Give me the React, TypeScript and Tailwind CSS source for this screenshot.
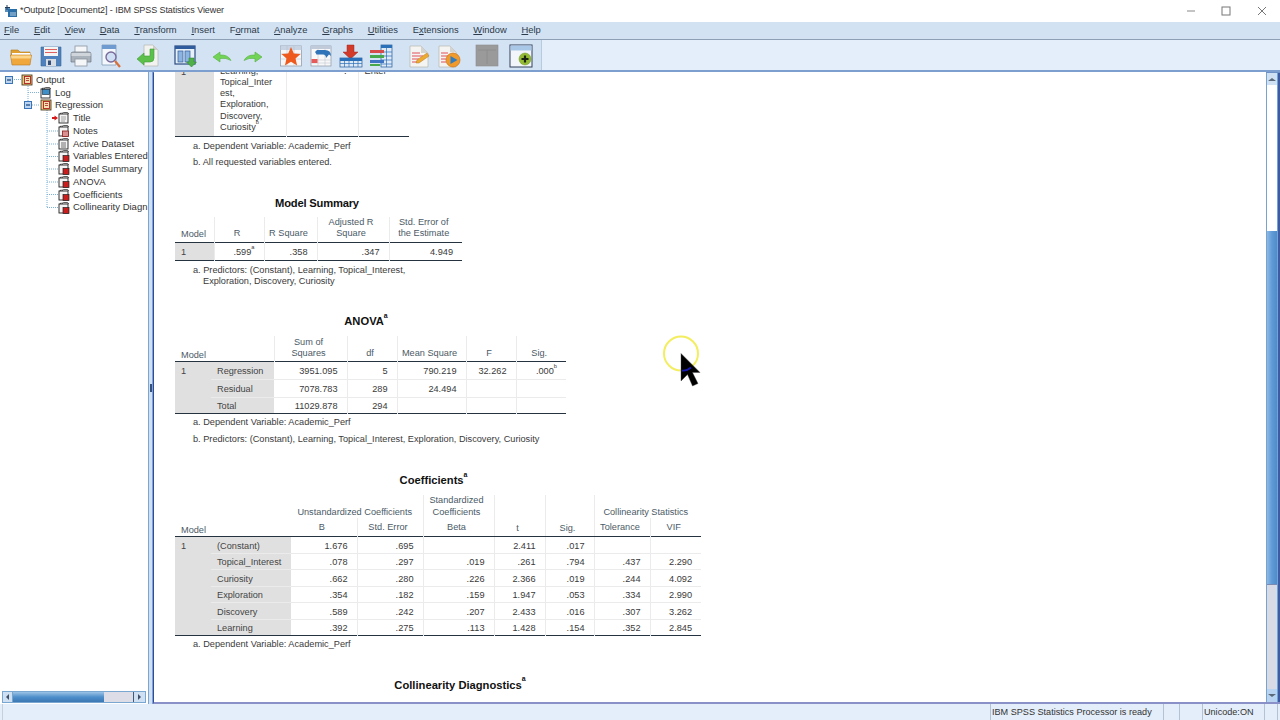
import React from "react";

const Sup = ({ c }: { c: string }) => <sup className="text-[0.62em] leading-[0] align-[0.55em]">{c}</sup>;

/* ---------- toolbar icons ---------- */
const Tool = ({ className, children }: { className?: string; children: React.ReactNode }) => (
  <svg viewBox="0 0 24 24" className={`w-[24px] h-[24px] shrink-0 ${className ?? ""}`}>{children}</svg>
);

const IconFolder = () => (
  <Tool>
    <path d="M2 6h7l2 2h10v4H2z" fill="#e0a030" stroke="#b07a20" strokeWidth=".6" />
    <rect x="3" y="9" width="18" height="3" fill="#fff" />
    <path d="M1.5 11h21l-1.5 10H3z" fill="#f0a83c" stroke="#b87a20" strokeWidth=".6" />
    <path d="M2 11.5h20l-.4 3H2.4z" fill="#fbd68a" />
  </Tool>
);
const IconSave = () => (
  <Tool>
    <path d="M2 3h20v19H2z" fill="#4f82bd" stroke="#3a6496" strokeWidth=".6" />
    <rect x="5" y="3" width="14" height="9" fill="#f4f4f4" />
    <path d="M6 5.5h12M6 8.5h12" stroke="#e06060" strokeWidth="1" />
    <rect x="7" y="15" width="10" height="7" fill="#d8dde4" />
    <rect x="9" y="16.5" width="3" height="4.5" fill="#33507a" />
  </Tool>
);
const IconPrint = () => (
  <Tool>
    <rect x="6" y="2" width="12" height="8" fill="#f4f6f8" stroke="#8a949e" strokeWidth=".8" />
    <path d="M2 10q0-2 2-2h16q2 0 2 2v8H2z" fill="#a9b1ba" stroke="#6e7780" strokeWidth=".7" />
    <rect x="2.5" y="9" width="19" height="3" fill="#cfd5db" />
    <rect x="6" y="15" width="12" height="7" fill="#f4f6f8" stroke="#8a949e" strokeWidth=".8" />
  </Tool>
);
const IconPreview = () => (
  <Tool>
    <path d="M3 1h14v20H3z" fill="#f4f7fb" stroke="#7f9ab8" strokeWidth=".8" />
    <rect x="3" y="1" width="14" height="4" fill="#6f9bd0" />
    <circle cx="12" cy="13" r="5" fill="#cfe0f4" stroke="#7a6a9a" strokeWidth="1.4" />
    <path d="M16 17l5 6" stroke="#d8703c" strokeWidth="2.2" />
  </Tool>
);
const IconExport = () => (
  <Tool>
    <path d="M8 1h9l5 5v16H8z" fill="#f2f2f0" stroke="#b5b5b0" strokeWidth=".7" />
    <path d="M17 1v5h5z" fill="#cfcfca" />
    <path d="M14 5h4v9q0 4-4 4H8v3l-7-6 7-6v3h6z" fill="#5cc04a" stroke="#3f9a35" strokeWidth=".6" />
  </Tool>
);
const IconGoto = () => (
  <Tool>
    <rect x="2" y="2" width="20" height="18" fill="#e8f0f8" stroke="#2a4a80" strokeWidth="1.2" />
    <rect x="2" y="2" width="20" height="3" fill="#2f5c9c" />
    <rect x="5" y="7" width="5" height="11" fill="#8cb4e0" stroke="#2f5c9c" strokeWidth=".7" />
    <rect x="12" y="7" width="5" height="11" fill="#8cb4e0" stroke="#2f5c9c" strokeWidth=".7" />
    <path d="M16 14h5v4h2.5l-5 5-5-5H16z" fill="#4fb04a" stroke="#2f8030" strokeWidth=".5" />
  </Tool>
);
const IconUndo = ({ flip }: { flip?: boolean }) => (
  <Tool>
    <g transform={flip ? "matrix(-1 0 0 1 24 0)" : undefined}>
      <path d="M3 13l7-5v3q8-.5 11 5.5-5-3-11-2V18z" fill="#72d456" stroke="#52ae3e" strokeWidth=".6" />
    </g>
  </Tool>
);
const IconStar = () => (
  <Tool>
    <rect x="1.5" y="2" width="21" height="20" fill="#f6f6f6" stroke="#8a94a4" strokeWidth=".7" />
    <rect x="1.5" y="2" width="21" height="4" fill="#c8d4e4" />
    <path d="M1.5 10h21M1.5 15h21M8 2v20M15 2v20" stroke="#b5bcc8" strokeWidth=".5" />
    <path d="M12 3l2.8 6.5 6.7.6-5 4.5 1.6 6.9-6.100-3.700-6.100 3.700 1.600-6.900-5-4.500 6.700-.6z" fill="#ee5a1e" />
  </Tool>
);
const IconSplit = () => (
  <Tool>
    <rect x="2" y="2" width="20" height="20" fill="#f8f8f8" stroke="#8a94a4" strokeWidth=".7" />
    <rect x="2" y="2" width="20" height="3" fill="#c0cad8" />
    <path d="M2 16h20M2 19h20M9 5v17M16 5v17" stroke="#b5bcc8" strokeWidth=".5" />
    <rect x="2.5" y="15" width="6" height="4" fill="#e65a5a" />
    <path d="M8 6h8q6 0 6 6l-2-1.500L17 14q0-3.500-3-3.500H8z" fill="#2f74b8" />
    <path d="M8 6l-2 2 2 3z" fill="#2f74b8" />
  </Tool>
);
const IconDownTable = () => (
  <Tool>
    <path d="M8 1h7v7h4l-7.500 7L4 8h4z" fill="#d23a2a" stroke="#a02a20" strokeWidth=".5" />
    <rect x="1" y="14" width="22" height="9" fill="#dfe9f4" stroke="#1f5a9a" strokeWidth=".7" />
    <rect x="1" y="14" width="22" height="3" fill="#2a70b8" />
    <path d="M1 19.500h22M5.500 17v6M10 17v6M14.500 17v6M19 17v6" stroke="#2a70b8" strokeWidth=".7" />
  </Tool>
);
const IconBars = () => (
  <Tool>
    <rect x="12" y="1" width="11" height="22" fill="#dfe9f4" stroke="#1f5a9a" strokeWidth=".7" />
    <rect x="12" y="1" width="11" height="3" fill="#2a70b8" />
    <path d="M12 8h11M12 12h11M12 16h11M12 20h11M17.500 4v19" stroke="#2a70b8" strokeWidth=".7" />
    <rect x="1" y="6" width="14" height="3" fill="#d64a4a" />
    <rect x="1" y="11" width="14" height="3" fill="#46a84a" />
    <rect x="1" y="16" width="14" height="3" fill="#3d74c4" />
    <rect x="1" y="20" width="10" height="2" fill="#46a84a" />
  </Tool>
);
const IconDocPen = () => (
  <Tool>
    <path d="M3 2h11l7 7v14H3z" fill="#f4f4f2" stroke="#b5b5b0" strokeWidth=".7" />
    <path d="M14 2v7h7z" fill="#d4d4d0" />
    <path d="M5 9h8M5 12h11M5 15h7M5 18h6" stroke="#e0505a" strokeWidth="1.2" />
    <path d="M9 19l1-3 10-7 2 3-10 7z" fill="#eeaa30" stroke="#b47a20" strokeWidth=".5" />
  </Tool>
);
const IconDocPlay = () => (
  <Tool>
    <path d="M2 2h11l6 6v15H2z" fill="#f4f4f2" stroke="#b5b5b0" strokeWidth=".7" />
    <path d="M13 2v6h6z" fill="#d4d4d0" />
    <path d="M4 9h7M4 12h7M4 15h5M4 18h5" stroke="#e0505a" strokeWidth="1.2" />
    <circle cx="16" cy="16" r="7" fill="#f09a2c" stroke="#c87418" strokeWidth=".7" />
    <path d="M13.500 12l7 4-7 4z" fill="#2f7cc0" />
  </Tool>
);
const IconGray = () => (
  <Tool>
    <rect x="1" y="1" width="22" height="21" fill="#9a9a9a" stroke="#8c8c8c" strokeWidth=".6" />
    <path d="M3 6h18M12 6v14" stroke="#8a8a8a" strokeWidth=".8" />
  </Tool>
);
const IconPlus = () => (
  <Tool>
    <rect x="1" y="1" width="22" height="22" fill="#f2f6fa" stroke="#33415a" strokeWidth="1" />
    <rect x="1.5" y="1.5" width="21" height="5" fill="#a9c8e8" />
    <circle cx="16" cy="15" r="6" fill="#93bc34" stroke="#6e9424" strokeWidth=".5" />
    <path d="M16 11.500v7M12.500 15h7" stroke="#1c2414" strokeWidth="2.2" />
  </Tool>
);

/* ---------- tree icons ---------- */
type Kind = "root" | "log" | "title" | "notes" | "doc" | "pivot";
const Book = ({ kind }: { kind: Kind }) => {
  const c = kind === "log" ? "#fff" : "#f4f4f4";
  return (
    <svg viewBox="0 0 12 12" className="w-[12px] h-[12px] shrink-0">
      {kind === "root" ? (
        <g>
          <rect x="1" y="1" width="10" height="10" fill="#e9c877" stroke="#3a2a10" strokeWidth=".8" />
          <rect x="3.500" y="2.500" width="6" height="7" fill="#f4e0b0" stroke="#b02020" strokeWidth=".9" />
          <path d="M5 4.500h3M5 6.500h3" stroke="#b02020" strokeWidth=".8" />
        </g>
      ) : (
        <g>
          <path d="M1.500 3q0-2 2-2" fill="none" stroke="#222" strokeWidth=".8" />
          <rect x="1" y="2" width="9" height="9" fill={c} stroke="#222" strokeWidth=".9" />
          <path d="M4 2q0-1.400 1.500-1.400H9q1.500 0 1.500 1.400" fill="none" stroke="#222" strokeWidth=".8" />
          {kind === "log" && <rect x="2.500" y="2.500" width="7" height="5" fill="#3f8fc8" stroke="#123" strokeWidth=".6" />}
          {kind === "title" && <path d="M3 5h5M3 7h5M3 9h4" stroke="#8a8a8a" strokeWidth=".8" />}
          {kind === "doc" && <path d="M3 5h5M3 7h5M3 9h5" stroke="#333" strokeWidth=".7" />}
          {kind === "notes" && <rect x="4.500" y="6" width="6" height="5.500" fill="#d89090" stroke="#8a1a1a" strokeWidth=".8" />}
          {kind === "pivot" && <rect x="5" y="5.500" width="6" height="6" fill="#c81e1e" stroke="#222" strokeWidth=".7" />}
        </g>
      )}
    </svg>
  );
};

const Expander = () => (
  <svg viewBox="0 0 8 8" className="w-[8px] h-[8px] shrink-0">
    <rect x=".5" y=".5" width="7" height="7" fill="#bcd4ee" stroke="#3a74b8" strokeWidth="1" />
    <path d="M2 4h4" stroke="#14407a" strokeWidth="1.200" />
  </svg>
);

const TreeRow = ({ label, kind, pl, exp, mark }: { label: string; kind: Kind; pl: string; exp?: boolean; mark?: boolean }) => (
  <div className={`relative h-[12.77px] flex items-center gap-[3px] whitespace-nowrap ${pl}`}>
    {exp && <span className="mr-[5px] flex"><Expander /></span>}
    {mark && (
      <svg viewBox="0 0 6 6" className="absolute left-[52px] top-[3px] w-[6px] h-[6px]">
        <path d="M0 2h2.500V.5L6 3 2.500 5.500V4H0z" fill="#d81818" />
      </svg>
    )}
    <Book kind={kind} />
    <span>{label}</span>
  </div>
);

/* ---------- table cells ---------- */
type CP = { className?: string; children?: React.ReactNode; colSpan?: number; rowSpan?: number };
const LINE = "border-[#ebebeb]";
const H = ({ className, children, colSpan, rowSpan }: CP) => (
  <td colSpan={colSpan} rowSpan={rowSpan} className={`p-0 pr-[4px] text-center align-bottom text-[#4b5a66] font-normal ${className ?? ""}`}>{children}</td>
);
const N = ({ className, children }: CP) => (
  <td className={`p-0 pt-[2.5px] pr-[9px] leading-[11.3px] text-right text-[#3a3a3a] border-l border-b ${LINE} ${className ?? ""}`}>{children}</td>
);
const L = ({ className, children }: CP) => (
  <td className={`p-0 pt-[2.5px] pl-[6px] leading-[11.3px] text-left text-[#444] bg-[#e0e0e0] ${className ?? ""}`}>{children}</td>
);
const ModelNo = ({ rowSpan }: { rowSpan: number }) => (
  <td rowSpan={rowSpan} className="p-0 pt-[4px] pl-[6px] leading-[11.3px] align-top text-left text-[#444] bg-[#e0e0e0]">1</td>
);
const Note = ({ className, children }: CP) => (
  <div className={`ml-[18px] leading-[11.3px] text-[#3a3a3a] ${className ?? ""}`}>{children}</div>
);
const Title = ({ className, children }: CP) => (
  <div className={`text-center text-[11.2px] leading-[16px] font-bold text-[#111] ${className ?? ""}`}>{children}</div>
);

const regRows = [
  ["Topical_Interest", ".078", ".297", ".019", ".261", ".794", ".437", "2.290"],
  ["Curiosity", ".662", ".280", ".226", "2.366", ".019", ".244", "4.092"],
  ["Exploration", ".354", ".182", ".159", "1.947", ".053", ".334", "2.990"],
  ["Discovery", ".589", ".242", ".207", "2.433", ".016", ".307", "3.262"],
  ["Learning", ".392", ".275", ".113", "1.428", ".154", ".352", "2.845"],
];

const treeItems: { label: string; kind: Kind }[] = [
  { label: "Title", kind: "title" },
  { label: "Notes", kind: "notes" },
  { label: "Active Dataset", kind: "doc" },
  { label: "Variables Entered", kind: "pivot" },
  { label: "Model Summary", kind: "pivot" },
  { label: "ANOVA", kind: "pivot" },
  { label: "Coefficients", kind: "pivot" },
  { label: "Collinearity Diagn", kind: "pivot" },
];

const Menu = ({ u, rest, pre }: { u: string; rest: string; pre?: string }) => (
  <span>{pre}<span className="underline">{u}</span>{rest}</span>
);

export default function App() {
  return (
    <div className="relative w-[1280px] h-[720px] flex flex-col overflow-hidden bg-white font-['Liberation_Sans',sans-serif] text-[10px] text-[#222]">
      {/* title bar */}
      <div className="h-[22px] shrink-0 flex items-center pl-[5px] bg-white">
        <svg viewBox="0 0 12 12" className="w-[12px] h-[12px] shrink-0">
          <rect x="0" y="2" width="5" height="5" fill="#5a8fc0" />
          <rect x="3" y="4" width="9" height="8" fill="#2a6ea8" />
          <path d="M5 8h6M5 10h6" stroke="#dfeaf4" strokeWidth=".8" />
          <path d="M2 0v5M0 2.500h5" stroke="#203a5a" strokeWidth="1" />
        </svg>
        <span className="ml-[3px] text-[#333] text-[9px] tracking-[-0.08px]">*Output2 [Document2] - IBM SPSS Statistics Viewer</span>
        <div className="ml-auto flex items-center text-[#777]">
          <svg viewBox="0 0 10 10" className="w-[10px] h-[10px] mr-[25px]"><path d="M1 5h8" stroke="#888" strokeWidth="1" /></svg>
          <svg viewBox="0 0 10 10" className="w-[10px] h-[10px] mr-[26px]"><rect x="1" y="1" width="8" height="8" fill="none" stroke="#777" strokeWidth="1" /></svg>
          <svg viewBox="0 0 10 10" className="w-[10px] h-[10px] mr-[13px]"><path d="M1 1l8 8M9 1l-8 8" stroke="#777" strokeWidth="1" /></svg>
        </div>
      </div>

      {/* menu bar */}
      <div className="h-[17px] shrink-0 flex items-center gap-[14.75px] pl-[4px] bg-[#d2e2f3] text-[#2c3a4a] text-[9.4px]">
        <Menu u="F" rest="ile" />
        <Menu u="E" rest="dit" />
        <Menu u="V" rest="iew" />
        <Menu u="D" rest="ata" />
        <Menu u="T" rest="ransform" />
        <Menu u="I" rest="nsert" />
        <Menu pre="F" u="o" rest="rmat" />
        <Menu u="A" rest="nalyze" />
        <Menu u="G" rest="raphs" />
        <Menu u="U" rest="tilities" />
        <Menu pre="E" u="x" rest="tensions" />
        <Menu u="W" rest="indow" />
        <Menu u="H" rest="elp" />
      </div>

      {/* toolbar */}
      <div className="h-[33px] shrink-0 flex bg-[#e4eefa] border-t border-[#8d9fb4] border-b-2 border-b-[#7c9fd0]">
        <div className="w-[542px] flex items-center pl-[9px] pt-[2px] bg-[#d4e3f4] border-r border-[#b8cadf]">
          <IconFolder />
          <span className="ml-[6px] flex"><IconSave /></span>
          <span className="ml-[6px] flex"><IconPrint /></span>
          <span className="ml-[6px] flex"><IconPreview /></span>
          <span className="ml-[13px] flex"><IconExport /></span>
          <span className="ml-[13px] flex"><IconGoto /></span>
          <span className="ml-[13px] flex"><IconUndo /></span>
          <span className="ml-[7px] flex"><IconUndo flip /></span>
          <span className="ml-[14px] flex"><IconStar /></span>
          <span className="ml-[6px] flex"><IconSplit /></span>
          <span className="ml-[6px] flex"><IconDownTable /></span>
          <span className="ml-[6px] flex"><IconBars /></span>
          <span className="ml-[14px] flex"><IconDocPen /></span>
          <span className="ml-[6px] flex"><IconDocPlay /></span>
          <span className="ml-[14px] flex"><IconGray /></span>
          <span className="ml-[10px] flex"><IconPlus /></span>
        </div>
      </div>

      {/* main */}
      <div className="flex-1 min-h-0 flex">
        {/* tree pane */}
        <div className="w-[148px] shrink-0 flex flex-col bg-white">
          <div className="relative flex-1 min-h-0 overflow-hidden text-[#333] text-[9.5px]">
            <svg className="absolute left-0 top-0 w-[148px] h-[150px] pointer-events-none" viewBox="0 0 148 150">
              <path d="M28 14v15M28 20.500h12M47 38v98M47 59h11M47 72h11M47 84.500h11M47 97h11M47 110h11M47 122.500h11M47 135.500h11M32 33h8M14 7.500h7" stroke="#7fb2d8" strokeWidth="1" strokeDasharray="1 1" fill="none" />
            </svg>
            <div className="relative pt-[1.5px]">
              <TreeRow label="Output" kind="root" pl="pl-[5px]" exp />
              <TreeRow label="Log" kind="log" pl="pl-[40px]" />
              <TreeRow label="Regression" kind="root" pl="pl-[24px]" exp />
              {treeItems.map((t, i) => (
                <TreeRow key={t.label} label={t.label} kind={t.kind} pl="pl-[58px]" mark={i === 0} />
              ))}
            </div>
          </div>
          {/* horizontal scrollbar */}
          <div className="h-[12px] shrink-0 mx-[2px] mb-[1px] flex items-stretch bg-gradient-to-b from-[#9cc3e6] via-[#4f8fcb] to-[#3b78b4] border border-[#79a7d2]">
            <div className="w-[10px] bg-[#cfe0f2] border-r border-[#7aa3cc] flex items-center justify-center">
              <span className="w-0 h-0 border-y-[3px] border-y-transparent border-r-[3px] border-r-[#40506a]" />
            </div>
            <div className="flex-1" />
            <div className="w-[30px] bg-[#dcdde6] border-r border-[#3d5a80]" />
            <div className="w-[11px] bg-[#cfe0f2] flex items-center justify-center">
              <span className="w-0 h-0 border-y-[3px] border-y-transparent border-l-[3px] border-l-[#40506a]" />
            </div>
          </div>
        </div>

        {/* splitter */}
        <div className="w-[5px] shrink-0 bg-[#cfe0f2] border-x border-[#7aa6d6] flex items-center justify-center">
          <span className="w-[2px] h-[8px] bg-[#36507c]" />
        </div>

        {/* output pane */}
        <div className="flex-1 min-w-0 flex border-l border-[#37479a] border-b-2 border-b-[#8a90c8] border-t border-t-[#6f92c6]">
          <div className="flex-1 min-w-0 overflow-hidden bg-white pl-[21px] -mt-px text-[9.2px]">
            {/* Variables entered, scrolled past the top of the pane */}
            <div className="-mt-[8px]">
              <table className="table-fixed border-collapse w-[234px]">
                <colgroup>
                  <col className="w-[39px]" />
                  <col className="w-[72px]" />
                  <col className="w-[72px]" />
                  <col className="w-[51px]" />
                </colgroup>
                <tbody>
                  <tr className="align-top border-b border-[#253240] h-[72px]">
                    <td className="p-0 pt-[1.5px] bg-[#e0e0e0] text-[#444] pl-[6px]">1</td>
                    <td className={`p-0 pt-[1.5px] pl-[6px] leading-[11.3px] text-[#3a3a3a] border-r ${LINE}`}>
                      Learning,<br />Topical_Inter<br />est,<br />Exploration,<br />Discovery,<br />Curiosity<Sup c="b" />
                    </td>
                    <td className={`p-0 pt-[1.5px] pr-[11px] text-right leading-[11.3px] border-r ${LINE}`}>.</td>
                    <td className="p-0 pt-[1.5px] pl-[6px] leading-[11.3px] text-[#3a3a3a]">Enter</td>
                  </tr>
                </tbody>
              </table>
            </div>
            <Note className="mt-[4px]">a. Dependent Variable: Academic_Perf</Note>
            <Note className="mt-[5.5px]">b. All requested variables entered.</Note>

            <Title className="w-[284px] mt-[26px] tracking-[-0.2px]">Model Summary</Title>
            <table className="table-fixed border-collapse w-[287px] mt-[6px]">
              <colgroup>
                <col className="w-[39px]" />
                <col className="w-[50px]" />
                <col className="w-[53px]" />
                <col className="w-[72px]" />
                <col className="w-[73px]" />
              </colgroup>
              <tbody>
                <tr className="h-[26px] border-b border-[#253240] leading-[11.3px]">
                  <H className="text-left pl-[6px] pb-[2px]">Model</H>
                  <H className={`pb-[3px] border-l ${LINE}`}>R</H>
                  <H className={`pb-[3px] border-l ${LINE}`}>R Square</H>
                  <H className={`pb-[3px] border-l ${LINE}`}>Adjusted R<br />Square</H>
                  <H className={`pb-[3px] border-l ${LINE}`}>Std. Error of<br />the Estimate</H>
                </tr>
                <tr className="h-[18px] border-b border-[#253240]">
                  <L>1</L>
                  <N className="border-b-0">.599<Sup c="a" /></N>
                  <N className="border-b-0">.358</N>
                  <N className="border-b-0">.347</N>
                  <N className="border-b-0">4.949</N>
                </tr>
              </tbody>
            </table>
            <Note className="mt-[3.5px]">a. Predictors: (Constant), Learning, Topical_Interest,</Note>
            <Note className="pl-[10px]">Exploration, Discovery, Curiosity</Note>

            <Title className="w-[382px] mt-[25.5px]">ANOVA<Sup c="a" /></Title>
            <table className="table-fixed border-collapse w-[391px] mt-[7px]">
              <colgroup>
                <col className="w-[36px]" />
                <col className="w-[63px]" />
                <col className="w-[73px]" />
                <col className="w-[50px]" />
                <col className="w-[69px]" />
                <col className="w-[50px]" />
                <col className="w-[50px]" />
              </colgroup>
              <tbody>
                <tr className="h-[26px] border-b border-[#253240] leading-[11.3px]">
                  <H colSpan={2} className="text-left pl-[6px]">Model</H>
                  <H className={`pb-[2px] border-l ${LINE}`}>Sum of<br />Squares</H>
                  <H className={`pb-[2px] border-l ${LINE}`}>df</H>
                  <H className={`pb-[2px] border-l ${LINE}`}>Mean Square</H>
                  <H className={`pb-[2px] border-l ${LINE}`}>F</H>
                  <H className={`pb-[2px] border-l ${LINE}`}>Sig.</H>
                </tr>
                <tr className="h-[18px]">
                  <ModelNo rowSpan={3} />
                  <L className={`border-b ${LINE}`}>Regression</L>
                  <N className="border-l-0">3951.095</N>
                  <N>5</N>
                  <N>790.219</N>
                  <N>32.262</N>
                  <N>.000<Sup c="b" /></N>
                </tr>
                <tr className="h-[17.5px]">
                  <L className={`border-b ${LINE}`}>Residual</L>
                  <N className="border-l-0">7078.783</N>
                  <N>289</N>
                  <N>24.494</N>
                  <N />
                  <N />
                </tr>
                <tr className="h-[16px] border-b border-[#253240]">
                  <L>Total</L>
                  <N className="border-l-0 border-b-0">11029.878</N>
                  <N className="border-b-0">294</N>
                  <N className="border-b-0" />
                  <N className="border-b-0" />
                  <N className="border-b-0" />
                </tr>
              </tbody>
            </table>
            <Note className="mt-[3.5px]">a. Dependent Variable: Academic_Perf</Note>
            <Note className="mt-[5px]">b. Predictors: (Constant), Learning, Topical_Interest, Exploration, Discovery, Curiosity</Note>

            <Title className="w-[517px] mt-[27.5px]">Coefficients<Sup c="a" /></Title>
            <table className="table-fixed border-collapse w-[526px] mt-[7px]">
              <colgroup>
                <col className="w-[36px]" />
                <col className="w-[80px]" />
                <col className="w-[66px]" />
                <col className="w-[66px]" />
                <col className="w-[71px]" />
                <col className="w-[51px]" />
                <col className="w-[49px]" />
                <col className="w-[56px]" />
                <col className="w-[51px]" />
              </colgroup>
              <tbody>
                <tr className="h-[22px] leading-[11.3px]">
                  <H colSpan={2} rowSpan={2} className="text-left pl-[6px] border-b border-b-[#253240]">Model</H>
                  <H colSpan={2} className="pr-[2px]">Unstandardized Coefficients</H>
                  <H className={`border-l ${LINE}`}>Standardized<br />Coefficients</H>
                  <H rowSpan={2} className={`pb-[2px] border-l ${LINE} border-b border-b-[#253240]`}>t</H>
                  <H rowSpan={2} className={`pb-[2px] border-l ${LINE} border-b border-b-[#253240]`}>Sig.</H>
                  <H colSpan={2} className={`pr-[2px] border-l ${LINE}`}>Collinearity Statistics</H>
                </tr>
                <tr className="h-[19px] border-b border-[#253240]">
                  <H className="pb-[2px]">B</H>
                  <H className={`pb-[2px] border-l ${LINE}`}>Std. Error</H>
                  <H className={`pb-[2px] border-l ${LINE}`}>Beta</H>
                  <H className={`pb-[2px] border-l ${LINE}`}>Tolerance</H>
                  <H className={`pb-[2px] border-l ${LINE}`}>VIF</H>
                </tr>
                <tr className="h-[16.5px]">
                  <ModelNo rowSpan={6} />
                  <L className={`border-b ${LINE}`}>(Constant)</L>
                  <N className="border-l-0">1.676</N>
                  <N>.695</N>
                  <N />
                  <N>2.411</N>
                  <N>.017</N>
                  <N />
                  <N />
                </tr>
                {regRows.map((r, i) => {
                  const last = i === regRows.length - 1;
                  return (
                    <tr key={r[0]} className={last ? "h-[16px] border-b border-[#253240]" : "h-[16.5px]"}>
                      <L className={last ? "" : `border-b ${LINE}`}>{r[0]}</L>
                      {r.slice(1).map((v, j) => (
                        <N key={j} className={`${j === 0 ? "border-l-0" : ""} ${last ? "border-b-0" : ""}`}>{v}</N>
                      ))}
                    </tr>
                  );
                })}
              </tbody>
            </table>
            <Note className="mt-[3.5px]">a. Dependent Variable: Academic_Perf</Note>

            <Title className="w-[570px] mt-[26px]">Collinearity Diagnostics<Sup c="a" /></Title>
          </div>

          {/* vertical scrollbar */}
          <div className="w-[14px] shrink-0 flex flex-col border-l border-[#7aa3cc] border-r-2 border-r-[#3e5aa0] pr-[1px] bg-[#6fa5da]">
            <div className="h-[12px] shrink-0 bg-[#cfe0f2] flex items-center justify-center">
              <span className="w-0 h-0 border-x-[4px] border-x-transparent border-b-[3px] border-b-[#5a6a7a]" />
            </div>
            <div className="h-[146px] shrink-0 bg-white" />
            <div className="flex-1 bg-gradient-to-r from-[#8dbae6] via-[#5f9ad6] to-[#4f8cc8]" />
            <div className="h-[105px] shrink-0 bg-[#d8dae6] border-t border-[#7a8ab0]" />
            <div className="h-[13px] shrink-0 bg-[#b8d4f0] flex items-center justify-center">
              <span className="w-0 h-0 border-x-[4px] border-x-transparent border-t-[3px] border-t-[#5a6a7a]" />
            </div>
          </div>
        </div>
      </div>

      {/* status bar */}
      <div className="h-[16px] shrink-0 flex bg-[#e4eefa] text-[#333] text-[9.1px] leading-[16px] pl-[2px] pr-[2px] whitespace-nowrap">
        <span className="flex-1 border-l border-[#c4d0de]" />
        <span className="w-[173px] pl-[1px] border-l border-[#b4c2d2]">IBM SPSS Statistics Processor is ready</span>
        <span className="w-[16px] border-l border-[#b4c2d2]" />
        <span className="w-[23px] border-l border-[#b4c2d2]" />
        <span className="w-[62px] pl-[1px] border-l border-[#b4c2d2]">Unicode:ON</span>
        <span className="w-[14px] border-x border-[#b4c2d2]" />
      </div>

      {/* mouse pointer over the page */}
      <svg className="absolute left-[660px] top-[334px] w-[44px] h-[54px] pointer-events-none" viewBox="0 0 44 54">
        <circle cx="21" cy="19.500" r="17" fill="none" stroke="#f3ee60" strokeWidth="2" />
        <path d="M21 19.500V47l6.500-6.500 5 11.500 5.500-2.500-5.500-11H40z" fill="#000" stroke="#444" strokeWidth=".4" />
        <path d="M21.500 36.500q5 1 9.500-3" fill="none" stroke="#1818b0" strokeWidth="1.800" />
      </svg>
    </div>
  );
}
